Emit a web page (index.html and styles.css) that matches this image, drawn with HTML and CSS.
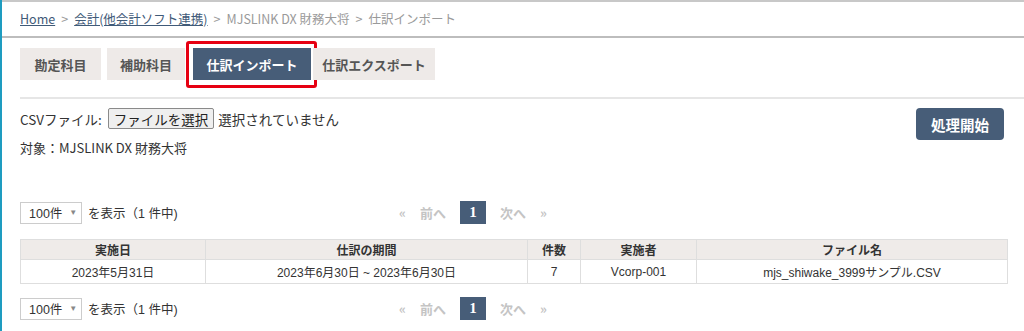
FILE: index.html
```html
<!DOCTYPE html>
<html lang="ja">
<head>
<meta charset="utf-8">
<link rel="stylesheet" href="styles.css">
</head>
<body>
<div class="page">
  <div class="crumbs">
    <a class="crumb-link" href="#">Home</a><span class="sep">&gt;</span><a class="crumb-link" href="#">会計(他会計ソフト連携)</a><span class="sep">&gt;</span><span class="crumb">MJSLINK DX 財務大将</span><span class="sep">&gt;</span><span class="crumb">仕訳インポート</span>
  </div>
  <div class="content">
    <div class="tabs">
      <div class="tab tab-1">勘定科目</div>
      <div class="tab tab-2">補助科目</div>
      <div class="tab tab-3 active">仕訳インポート<span class="highlight"></span></div>
      <div class="tab tab-4">仕訳エクスポート</div>
    </div>
    <div class="divider"></div>
    <div class="form">
      <div class="form-left">
        <div class="file-row">
          <span class="label">CSVファイル:</span>
          <span class="file-btn">ファイルを選択</span>
          <span class="file-none">選択されていません</span>
        </div>
        <div class="target">対象：MJSLINK DX 財務大将</div>
      </div>
      <button class="start-btn">処理開始</button>
    </div>
    <div class="list-bar top-bar">
      <div class="per-page">
        <span class="select">100件<span class="caret">▼</span></span>
        <span class="count">を表示（1 件中)</span>
      </div>
      <div class="pager">
        <span class="pg-arrow">«</span>
        <span class="pg-text">前へ</span>
        <span class="pg-current">1</span>
        <span class="pg-text">次へ</span>
        <span class="pg-arrow">»</span>
      </div>
    </div>
    <table class="grid">
      <thead>
        <tr>
          <th class="c1">実施日</th>
          <th class="c2">仕訳の期間</th>
          <th class="c3">件数</th>
          <th class="c4">実施者</th>
          <th class="c5">ファイル名</th>
        </tr>
      </thead>
      <tbody>
        <tr>
          <td>2023年5月31日</td>
          <td>2023年6月30日 ~ 2023年6月30日</td>
          <td>7</td>
          <td>Vcorp-001</td>
          <td>mjs_shiwake_3999サンプル.CSV</td>
        </tr>
      </tbody>
    </table>
    <div class="list-bar bottom-bar">
      <div class="per-page">
        <span class="select">100件<span class="caret">▼</span></span>
        <span class="count">を表示（1 件中)</span>
      </div>
      <div class="pager">
        <span class="pg-arrow">«</span>
        <span class="pg-text">前へ</span>
        <span class="pg-current">1</span>
        <span class="pg-text">次へ</span>
        <span class="pg-arrow">»</span>
      </div>
    </div>
  </div>
</div>
</body>
</html>
```
FILE: styles.css
```css
html, body {
  margin: 0;
  padding: 0;
  background: #fff;
}
body {
  font-family: "Noto Sans CJK JP", "Noto Sans", sans-serif;
  font-size: 13px;
  color: #333;
  width: 1024px;
  height: 331px;
  overflow: hidden;
}
.page {
  position: relative;
  height: 331px;
  border-left: 2px solid #1e9cc0;
  box-sizing: border-box;
}
.crumbs {
  height: 34px;
  border-top: 2px solid #c8c8c8;
  border-bottom: 2px solid #bdbdbd;
  padding-left: 18px;
  display: flex;
  align-items: center;
  font-size: 12.5px;
  color: #9a9a9a;
  line-height: 1;
}
.crumb-link {
  color: #3f5a78;
  text-decoration: underline;
}
.sep {
  margin: 0 6px;
  color: #9a9a9a;
}
.crumb {
  color: #9a9a9a;
}
.content {
  padding-left: 18px;
}
.tabs {
  display: flex;
  margin-top: 10px;
  height: 32px;
}
.tab {
  position: relative;
  display: flex;
  align-items: center;
  justify-content: center;
  background: #eeeae8;
  color: #555;
  font-weight: bold;
  font-size: 13px;
  height: 32px;
}
.tab-1 { width: 81px; margin-right: 6px; }
.tab-2 { width: 78px; margin-right: 8px; }
.tab-3 { width: 118px; margin-right: 2px; }
.tab-4 { width: 122px; }
.tab.active {
  background: #475d78;
  color: #fff;
}
.highlight {
  position: absolute;
  left: -7px;
  top: -7px;
  width: 131px;
  height: 47px;
  border: 3px solid #e60012;
  border-radius: 3px;
  box-sizing: border-box;
}
.divider {
  margin-top: 17px;
  height: 2px;
  background: #e6e6e6;
}
.form {
  display: flex;
  justify-content: space-between;
  align-items: flex-start;
  margin-top: 9px;
  padding-right: 20px;
}
.file-row {
  display: flex;
  align-items: center;
  height: 21px;
  font-size: 13.5px;
  color: #333;
}
.label {
  margin-right: 6px;
}
.file-btn {
  display: inline-flex;
  align-items: center;
  height: 19px;
  padding: 0 5px;
  border: 1px solid #8a8a8a;
  border-radius: 2px;
  background: #efefef;
  font-size: 13.5px;
  color: #222;
  margin-right: 4px;
}
.target {
  margin-top: 9px;
  font-size: 13px;
  color: #333;
}
.start-btn {
  width: 88px;
  height: 32px;
  border: none;
  border-radius: 4px;
  background: #475d78;
  color: #fff;
  font-family: "Noto Sans CJK JP", sans-serif;
  font-weight: bold;
  font-size: 14.5px;
  margin-top: 0;
  padding: 0;
}
.list-bar {
  display: grid;
  grid-template-columns: 371px auto;
  align-items: center;
  height: 23px;
}
.top-bar {
  margin-top: 44px;
}
.bottom-bar {
  margin-top: 13px;
}
.per-page {
  display: flex;
  align-items: center;
  font-family: "Liberation Sans", "Noto Sans CJK JP", sans-serif;
  font-size: 12.5px;
  color: #333;
}
.select {
  display: inline-flex;
  align-items: center;
  width: 62px;
  height: 22px;
  border: 1px solid #ccc;
  box-sizing: border-box;
  padding-left: 8px;
  font-size: 12.5px;
  color: #333;
  background: #fff;
}
.caret {
  font-size: 8px;
  color: #888;
  margin-left: 7px;
}
.count {
  margin-left: 6px;
}
.pager {
  display: flex;
  align-items: center;
  font-family: "Noto Sans CJK JP", sans-serif;
  font-size: 13px;
  color: #c4c4c4;
  font-weight: bold;
}
.pg-arrow {
  font-size: 13px;
  margin: 0 8px;
}
.pg-text {
  margin: 0 6px;
}
.pg-current {
  display: inline-flex;
  align-items: center;
  justify-content: center;
  width: 26px;
  height: 23px;
  background: #475d78;
  color: #fff;
  font-family: "Liberation Serif", serif;
  font-size: 15px;
  font-weight: bold;
  margin: 0 8px;
}
.grid {
  margin-top: 15px;
  width: 988px;
  border-collapse: collapse;
  font-family: "Liberation Sans", "Noto Sans CJK JP", sans-serif;
  font-size: 12px;
  color: #333;
}
.grid th, .grid td {
  border: 1px solid #dedede;
  text-align: center;
  padding: 0;
}
.grid th {
  background: #efebe9;
  font-weight: bold;
  height: 19px;
}
.grid td {
  height: 23px;
}
.c1 { width: 184px; }
.c2 { width: 321px; }
.c3 { width: 52px; }
.c4 { width: 115px; }
.c5 { width: auto; }
```
